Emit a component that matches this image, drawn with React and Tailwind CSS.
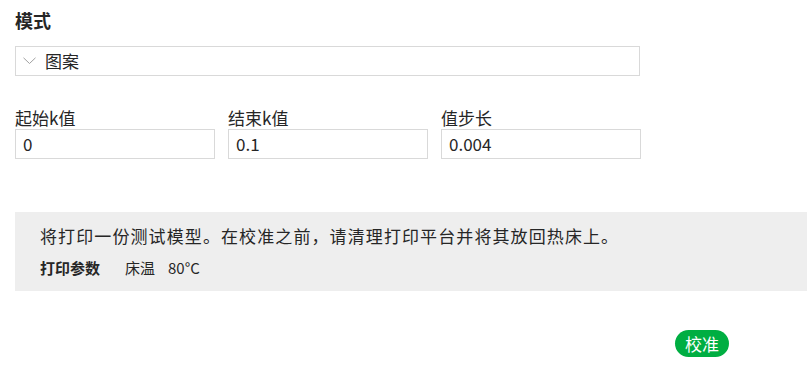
import React from 'react';

const fields = [
  { label: '起始k值', value: '0' },
  { label: '结束k值', value: '0.1' },
  { label: '值步长', value: '0.004' },
];

const App = () => {
  return (
    <div className="w-[807px] h-[390px] bg-white pl-[15px] text-[#262626] font-['Noto_Sans_CJK_SC',sans-serif] overflow-hidden">
      <div className="h-[40px] flex items-center text-[18px] font-bold">模式</div>

      <div className="mt-[6px] w-[625px] h-[30px] border border-[#d9d9d9] flex items-center pl-[7px]">
        <svg width="13" height="8" viewBox="0 0 13 8" fill="none">
          <path d="M0.5 0.8L6.5 6.5L12.5 0.8" stroke="#a0a0a0" strokeWidth="1" />
        </svg>
        <span className="ml-[9px] text-[17px]">图案</span>
      </div>

      <div className="mt-[30px] flex gap-[13px]">
        {fields.map((f) => (
          <div key={f.label} className="w-[200px]">
            <div className="h-[23px] flex items-center text-[17px]">{f.label}</div>
            <div className="h-[30px] border border-[#d9d9d9] flex items-center pl-[7px] text-[17px]">
              {f.value}
            </div>
          </div>
        ))}
      </div>

      <div className="mt-[53px] h-[79px] bg-[#eeeeee] pl-[25px] pt-[12px]">
        <div className="h-[24px] flex items-center text-[17px] tracking-[1.1px]">
          将打印一份测试模型。在校准之前，请清理打印平台并将其放回热床上。
        </div>
        <div className="mt-[8px] h-[24px] flex items-center text-[15px]">
          <span className="font-bold w-[85px]">打印参数</span>
          <span>床温</span>
          <span className="ml-[13px]">80°C</span>
        </div>
      </div>

      <div className="mt-[39px] pl-[660px]">
        <button className="h-[27px] w-[54px] rounded-full bg-[#00ae42] text-white text-[17px] flex items-center justify-center">
          校准
        </button>
      </div>
    </div>
  );
};

export default App;
